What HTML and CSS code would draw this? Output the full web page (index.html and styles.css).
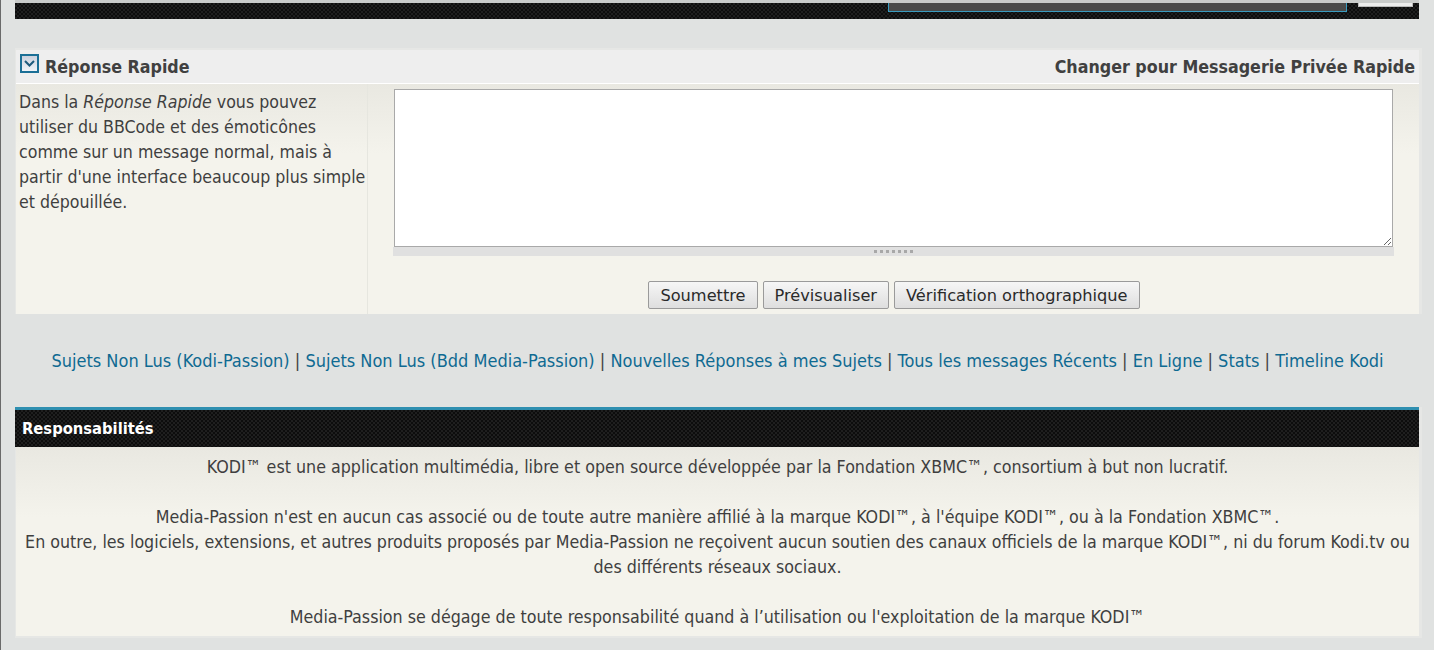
FILE: index.html
```html
<!DOCTYPE html>
<html lang="fr">
<head>
    <meta charset="UTF-8">
    <title>Réponse Rapide</title>
    <link rel="stylesheet" href="styles.css">
</head>
<body>
    <!-- bar at the top, cut by the window -->
    <div class="topbar">
        <div class="search"></div>
        <div class="go"></div>
    </div>

    <!-- quick reply -->
    <div class="panel reply">
        <div class="reply-head">
            <div class="reply-title">
                <svg class="toggle" width="19" height="19" viewBox="0 0 19 19">
                    <defs>
                        <linearGradient id="toggle-bg" x1="0" y1="0" x2="0" y2="1">
                            <stop offset="0" stop-color="#c9cfdc"/>
                            <stop offset="1" stop-color="#f2f6fa"/>
                        </linearGradient>
                    </defs>
                    <rect x="1" y="1" width="17" height="17" fill="url(#toggle-bg)" stroke="#1b6f96" stroke-width="2"/>
                    <path d="M5 7 L9.5 11.5 L14 7" fill="none" stroke="#1d5a7c" stroke-width="2"/>
                </svg>
                <span>Réponse Rapide</span>
            </div>
            <span>Changer pour Messagerie Privée Rapide</span>
        </div>
        <div class="reply-body">
            <div class="reply-help">
                Dans la <em>Réponse Rapide</em> vous pouvez utiliser du BBCode et des émoticônes comme sur un message normal, mais à partir d'une interface beaucoup plus simple et dépouillée.
            </div>
            <div class="reply-form">
                <textarea class="message"></textarea>
                <div class="grip"><span class="grip-dots"></span></div>
                <div class="buttons">
                    <button>Soumettre</button>
                    <button>Prévisualiser</button>
                    <button>Vérification orthographique</button>
                </div>
            </div>
        </div>
    </div>

    <div class="links">
        <a href="#">Sujets Non Lus (Kodi-Passion)</a> |
        <a href="#">Sujets Non Lus (Bdd Media-Passion)</a> |
        <a href="#">Nouvelles Réponses à mes Sujets</a> |
        <a href="#">Tous les messages Récents</a> |
        <a href="#">En Ligne</a> |
        <a href="#">Stats</a> |
        <a href="#">Timeline Kodi</a>
    </div>

    <!-- disclaimer -->
    <div class="panel legal">
        <div class="legal-head">Responsabilités</div>
        <div class="legal-body">
            KODI™ est une application multimédia, libre et open source développée par la Fondation XBMC™, consortium à but non lucratif.<br>
            <br>
            Media-Passion n'est en aucun cas associé ou de toute autre manière affilié à la marque KODI™, à l'équipe KODI™, ou à la Fondation XBMC™.<br>
            En outre, les logiciels, extensions, et autres produits proposés par Media-Passion ne reçoivent aucun soutien des canaux officiels de la marque KODI™, ni du forum Kodi.tv ou des différents réseaux sociaux.<br>
            <br>
            Media-Passion se dégage de toute responsabilité quand à l’utilisation ou l'exploitation de la marque KODI™
        </div>
    </div>
</body>
</html>
```

FILE: styles.css
```css
* {
    box-sizing: border-box;
}

body {
    margin: 0;
    height: 650px;
    overflow: hidden;
    padding: 0 14px 0 14px;
    border-left: 1px solid #6a6a6a;
    background: #e0e2e1;
    font-family: "DejaVu Sans Condensed", "DejaVu Sans", sans-serif;
    font-size: 17.7px;
    color: #3f3f3f;
}

.topbar {
    display: flex;
    justify-content: flex-end;
    align-items: flex-start;
    width: 1404px;
    height: 19px;
    padding-right: 6px;
    border-top: 3px solid #c9cbca;
    background: #141414 repeating-conic-gradient(#1f1f1f 0 25%, #0d0d0d 0 50%) 0 0 / 4px 4px;
}

.search {
    width: 459px;
    height: 9px;
    margin-right: 11px;
    background: #4a4a4a;
    border: 1px solid #3a9cc0;
    border-top: none;
}

.go {
    width: 55px;
    height: 4px;
    background: #ececec;
    border: 1px solid #bbb;
    border-top: none;
}

.panel {
    background: #f4f3ec;
    border: solid #e6e7e5;
    border-width: 2px 3px 2px 1px;
}

.reply {
    margin-top: 29px;
    width: 1407px;
    height: 266px;
}

.reply-head {
    display: flex;
    justify-content: space-between;
    align-items: center;
    height: 34px;
    padding: 0 4px;
    background: #eeeeee;
    border-bottom: 1px solid #fff;
    font-weight: bold;
    color: #404040;
}

.reply-title {
    display: flex;
    align-items: center;
    gap: 6px;
}

.toggle {
    margin-top: -7px;
}

.reply-body {
    display: flex;
    height: 230px;
    background: linear-gradient(#e9e8e1, #f4f3ec 70px);
}

.reply-help {
    flex: none;
    width: 352px;
    padding: 6px 0 0 3px;
    font-size: 17.6px;
    line-height: 25px;
    border-right: 1px solid #e6e6df;
}

.reply-form {
    flex: 1;
    padding: 5px 26px 0 26px;
}

.message {
    display: block;
    width: 999px;
    height: 158px;
    background: #fff;
    border: 1px solid #a9a9a9;
    margin: 0;
}

.grip {
    display: flex;
    justify-content: center;
    padding-top: 3px;
    width: 1001px;
    height: 9px;
    margin-left: -1px;
    background: #e0e0e0;
}

.grip-dots {
    width: 40px;
    height: 3px;
    background: repeating-linear-gradient(90deg, #a8a8a8 0 3px, transparent 3px 6px);
}

.buttons {
    display: flex;
    justify-content: center;
    gap: 5px;
    margin-top: 25px;
}

button {
    height: 28px;
    padding: 0 11px;
    font-family: "DejaVu Sans", sans-serif;
    font-size: 16.2px;
    color: #2a2a2a;
    background: linear-gradient(#f6f6f6, #dedede);
    border: 1px solid #9a9a9a;
    border-radius: 2px;
}

.links {
    margin-top: 34px;
    width: 1405px;
    height: 59px;
    font-size: 18px;
    text-align: center;
    line-height: 25px;
}

.links a {
    color: #0f6a92;
    text-decoration: none;
}

.legal {
    border-top: none;
    width: 1407px;
    height: 231px;
}

.legal-head {
    height: 40px;
    line-height: 37px;
    border-top: 3px solid #2f8fb0;
    margin-left: -1px;
    padding-left: 7px;
    background: #141414 repeating-conic-gradient(#1f1f1f 0 25%, #0d0d0d 0 50%) 0 0 / 4px 4px;
    color: #fff;
    font-size: 16.4px;
    font-weight: bold;
}

.legal-body {
    padding: 8px 5px 0;
    text-align: center;
    line-height: 25px;
    background: linear-gradient(#e9e8e1, #f4f3ec 70px);
    height: 189px;
}
```
